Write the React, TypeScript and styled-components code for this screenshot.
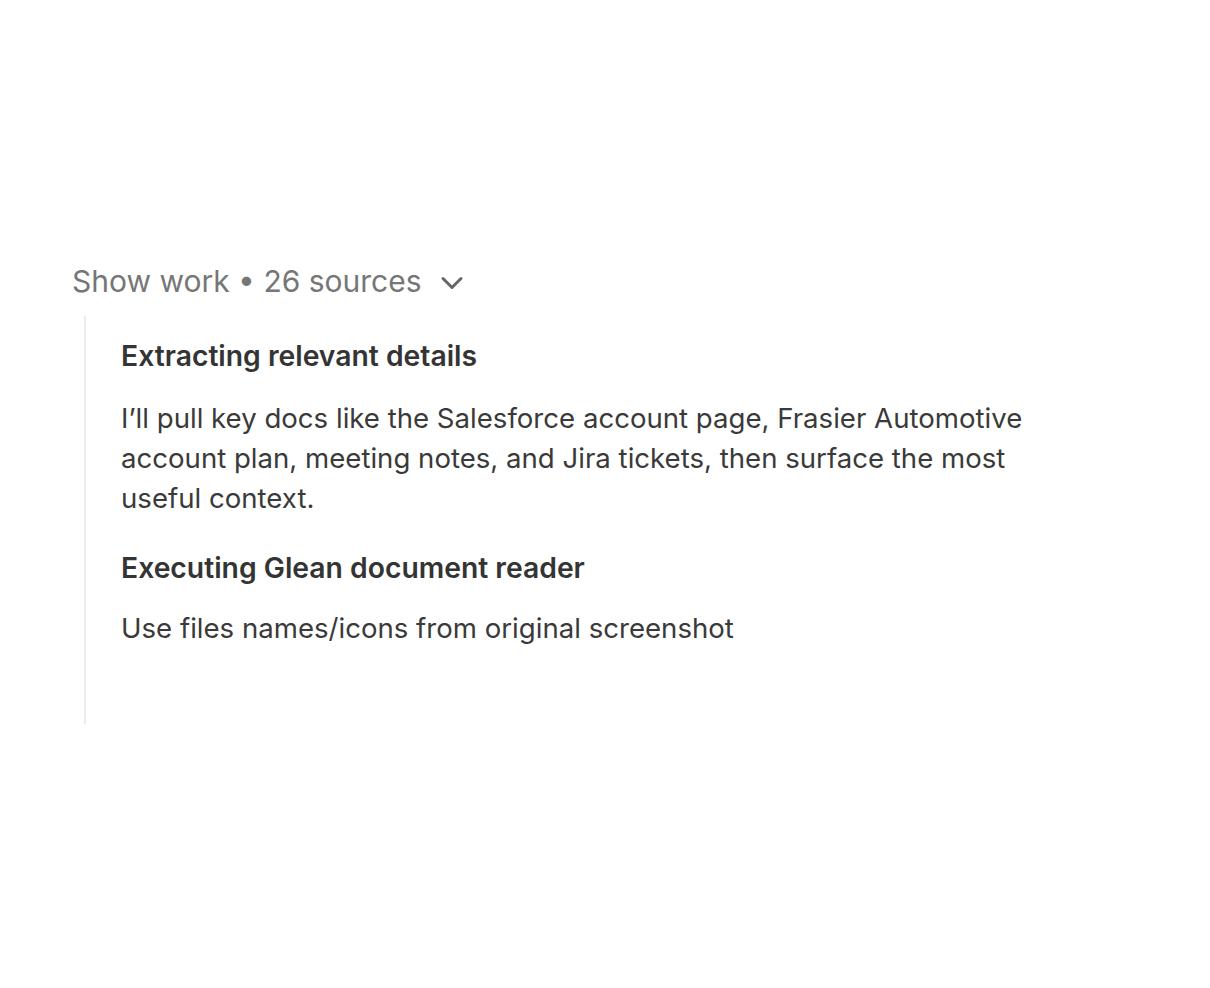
import React, { useState } from 'react';
import styled, { createGlobalStyle } from 'styled-components';

const GlobalStyle = createGlobalStyle`
  html, body {
    margin: 0;
    padding: 0;
    background: #ffffff;
  }
  body {
    font-family: Inter, "Noto Sans", "Liberation Sans", sans-serif;
    -webkit-font-smoothing: antialiased;
  }
`;

const Page = styled.main`
  width: 1210px;
  height: 988px;
  box-sizing: border-box;
  padding: 261px 0 0 72px;
`;

const Toggle = styled.button`
  display: flex;
  align-items: center;
  gap: 12px;
  background: none;
  border: none;
  padding: 0;
  font-family: inherit;
  font-size: 30px;
  line-height: 40px;
  color: #767676;
  cursor: pointer;
`;

const Chevron = styled.svg<{ open: boolean }>`
  width: 36px;
  height: 36px;
  margin-top: 4px;
  transform: rotate(${({ open }) => (open ? '0deg' : '-90deg')});
`;

const Steps = styled.div`
  margin: 15px 0 0 12px;
  border-left: 2px solid #ececec;
  padding: 22px 0 0 35px;
  height: 408px;
  box-sizing: border-box;
`;

const StepTitle = styled.h3`
  margin: 0 0 24px;
  font-size: 28.3px;
  line-height: 36px;
  font-weight: 600;
  color: #343434;
`;

const StepText = styled.p`
  margin: 0 0 32px;
  max-width: 915px;
  font-size: 27.6px;
  line-height: 40px;
  color: #3a3a3a;

  &:last-child {
    margin-top: -2px;
  }
`;

export default function App() {
  const [open, setOpen] = useState(true);

  return (
    <>
      <GlobalStyle />
      <Page>
        <Toggle onClick={() => setOpen(!open)}>
          Show work • 26 sources
          <Chevron open={open} viewBox="0 0 24 24" fill="none" stroke="#666" strokeWidth="2" strokeLinecap="round" strokeLinejoin="round">
            <path d="M6 9l6 6 6-6" />
          </Chevron>
        </Toggle>
        {open && (
          <Steps>
            <StepTitle>Extracting relevant details</StepTitle>
            <StepText>
              I’ll pull key docs like the Salesforce account page, Frasier Automotive account plan, meeting notes, and Jira tickets, then surface the most useful context.
            </StepText>
            <StepTitle>Executing Glean document reader</StepTitle>
            <StepText>Use files names/icons from original screenshot</StepText>
          </Steps>
        )}
      </Page>
    </>
  );
}
